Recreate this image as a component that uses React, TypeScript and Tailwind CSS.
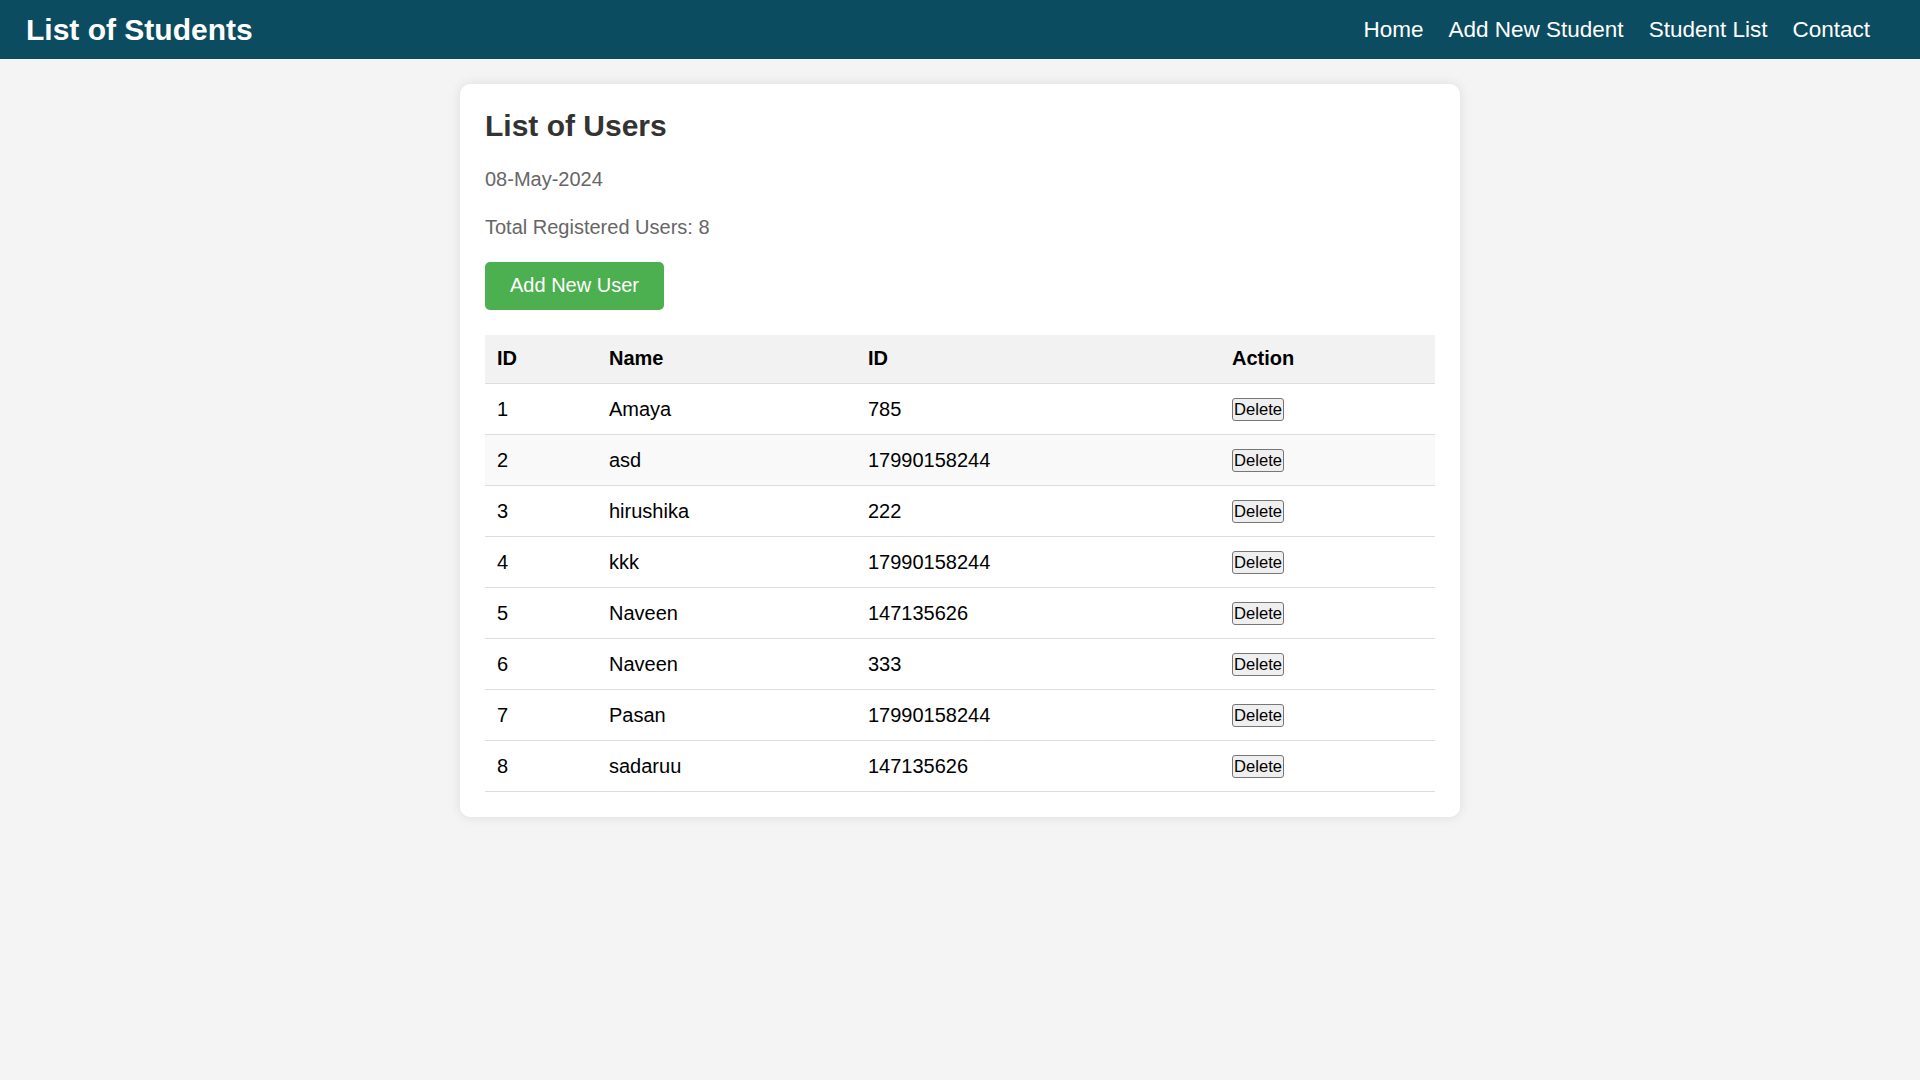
import React from "react"

const users = [
  { id: 1, name: "Amaya", code: "785" },
  { id: 2, name: "asd", code: "17990158244" },
  { id: 3, name: "hirushika", code: "222" },
  { id: 4, name: "kkk", code: "17990158244" },
  { id: 5, name: "Naveen", code: "147135626" },
  { id: 6, name: "Naveen", code: "333" },
  { id: 7, name: "Pasan", code: "17990158244" },
  { id: 8, name: "sadaruu", code: "147135626" },
]

const navLinks = ["Home", "Add New Student", "Student List", "Contact"]

export default function App() {
  return (
    <div className="min-h-screen bg-[#f4f4f4] leading-[1.15] font-['Liberation_Sans',Arial,sans-serif]">
      <header className="h-[59px] bg-[#0b4c60] flex items-center justify-between pl-[26px] pr-[50px]">
        <h1 className="text-[30px] font-bold text-white leading-none">List of Students</h1>
        <nav className="flex items-center gap-[25px]">
          {navLinks.map((link) => (
            <a key={link} href="#" className="text-[22.5px] text-white leading-none mt-[1px]">
              {link}
            </a>
          ))}
        </nav>
      </header>

      <main className="w-[1000px] mx-auto mt-[25px] bg-white rounded-[10px] shadow-[0_0_12px_rgba(0,0,0,0.1)] p-[25px]">
        <h2 className="text-[30px] font-bold text-[#333]">List of Users</h2>
        <p className="mt-[24px] text-[20px] text-[#666]">08-May-2024</p>
        <p className="mt-[25px] text-[20px] text-[#666]">Total Registered Users: 8</p>
        <button className="mt-[23px] h-[48px] px-[25px] bg-[#4caf50] text-white text-[20px] rounded-[5px]">
          Add New User
        </button>

        <table className="mt-[25px] w-[950px] border-collapse table-fixed text-[20px] text-black">
          <thead>
            <tr className="h-[49px] bg-[#f2f2f2] border-b border-[#ddd]">
              <th className="w-[112px] px-[12px] text-left font-bold">ID</th>
              <th className="w-[259px] px-[12px] text-left font-bold">Name</th>
              <th className="w-[364px] px-[12px] text-left font-bold">ID</th>
              <th className="w-[215px] px-[12px] text-left font-bold">Action</th>
            </tr>
          </thead>
          <tbody>
            {users.map((u) => (
              <tr
                key={u.id}
                className={u.id === 2 ? "h-[51px] border-b border-[#ddd] bg-[#f9f9f9]" : "h-[51px] border-b border-[#ddd]"}
              >
                <td className="px-[12px]">{u.id}</td>
                <td className="px-[12px]">{u.name}</td>
                <td className="px-[12px]">{u.code}</td>
                <td className="px-[12px]">
                  <button className="h-[23px] px-[1px] text-[16.6px] leading-none bg-[#efefef] border border-[#767676] rounded-[3px] text-black">
                    Delete
                  </button>
                </td>
              </tr>
            ))}
          </tbody>
        </table>
      </main>
    </div>
  )
}
